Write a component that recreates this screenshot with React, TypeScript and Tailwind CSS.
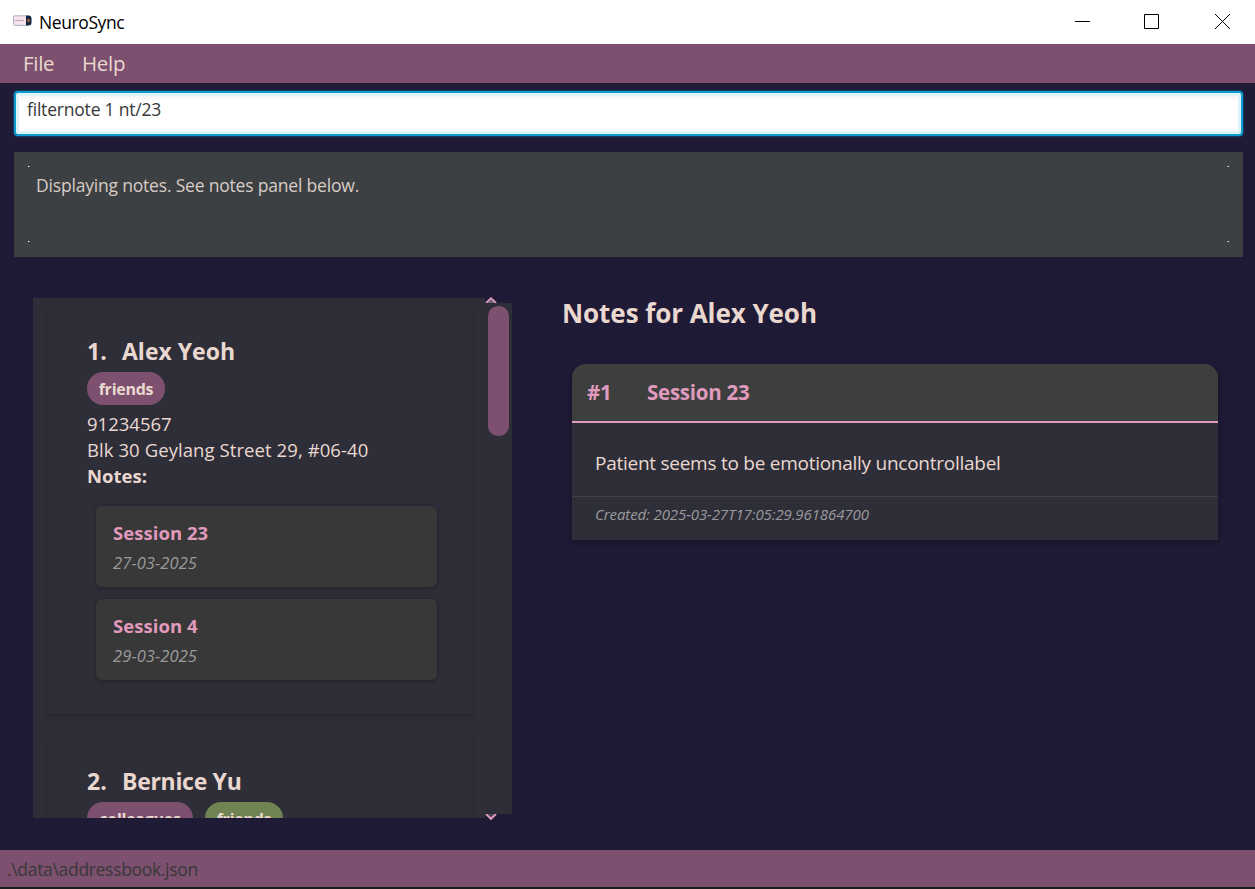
function Tag({ label, green = false }: { label: string; green?: boolean }) {
  return (
    <span
      className={`flex h-[33px] justify-center rounded-[16px] pt-px text-[16px] font-bold leading-[33px] tracking-[-0.25px] ${
        green ? "bg-[#6f8353]" : "bg-[#7c506e]"
      } ${label.length > 8 ? "w-[106px]" : "w-[78px]"}`}
    >
      {label}
    </span>
  );
}

function SessionCard({ title, date }: { title: string; date: string }) {
  return (
    <div className="h-[81px] w-[341px] rounded-[6px] bg-[#383838] pl-[17px] pt-[14px] shadow-[0_1px_4px_rgba(0,0,0,0.35)]">
      <div className="text-[18.5px] font-bold leading-[26px] tracking-[0.05px] text-[#e09abd]">{title}</div>
      <div className="mt-[5px] text-[16.5px] italic leading-6 tracking-[0.1px] text-[#9a9a9a]">{date}</div>
    </div>
  );
}

function PersonName({ index, name, tight = false }: { index: string; name: string; tight?: boolean }) {
  return (
    <div className="flex text-[23px] font-bold leading-8">
      <span className="w-[35px] shrink-0">{index}</span>
      <span className={tight ? "tracking-[-0.3px]" : ""}>{name}</span>
    </div>
  );
}

function CornerDots() {
  return (
    <div className="flex justify-between">
      <span className="size-px bg-white shadow-[1px_0_0_rgba(255,255,255,0.35)]" />
      <span className="size-px bg-white shadow-[-1px_0_0_rgba(255,255,255,0.35)]" />
    </div>
  );
}

export default function App() {
  return (
    <div className="flex h-[889px] w-[1255px] flex-col overflow-hidden whitespace-nowrap bg-[#1f1a36] font-['Open_Sans','Noto_Sans',sans-serif] text-[#ead8d0]">
      <header className="flex h-11 shrink-0 items-center bg-white pl-[13px] pr-[25px] text-black">
        <svg width="19" height="12" viewBox="0 0 19 12" className="mt-[-2px]">
          <rect x="0.5" y="0.8" width="14" height="9.6" rx="1" fill="#f6e3ee" stroke="#a9b3c4" />
          <path d="M13 .5h2.5a3 3 0 0 1 3 3v4a3 3 0 0 1-3 3H13z" fill="#12233d" />
          <ellipse cx="15.5" cy="5.5" rx="1.5" ry="2" fill="#8a5a3c" />
          <path d="M2 5.5h9" stroke="#b5aebb" strokeWidth="1" />
        </svg>
        <h1 className="ml-[7px] text-[17.5px] tracking-[-0.4px]">NeuroSync</h1>
        <div className="ml-auto flex pb-px">
          <svg width="15" height="15" className="mr-[54px]"><path d="M0 7.5h15" stroke="#000" /></svg>
          <svg width="15" height="15" className="mr-[56px]"><path d="M.5.5h14v14H.5z" fill="none" stroke="#000" /></svg>
          <svg width="15" height="15"><path d="M0 0l15 15M15 0L0 15" stroke="#000" /></svg>
        </div>
      </header>
      <nav className="flex h-[39px] shrink-0 items-center bg-[#7c506e] pl-[23px] text-[20.5px] tracking-[-0.3px]">
        <span className="w-[59px]">File</span>
        <span>Help</span>
      </nav>
      <div className="ml-[14px] mr-3 mt-2 h-[45px] shrink-0 rounded-[4px] border-2 border-[#0d9ccf] bg-white pl-[11px] text-[17.5px] leading-[33px] tracking-[-0.2px] text-[#383838] shadow-[0_0_2px_#0d9ccf,inset_0_0_0_3px_#dff3fb,inset_0_6px_3px_rgba(0,0,0,0.04)]">
        filternote 1 nt/23
      </div>
      <div className="ml-[14px] mr-3 mt-4 flex h-[105px] shrink-0 flex-col bg-[#3c4042] px-[14px] pt-[14px] text-[17.5px] leading-[26px] tracking-[-0.19px] text-[#d8ccc6]">
        <CornerDots />
        <p className="h-[74px] pl-2 pt-[5px]">Displaying notes. See notes panel below.</p>
        <CornerDots />
      </div>
      <main className="mt-[41px] flex h-[520px] shrink-0">
        <section className="relative ml-[33px] flex h-[520px] w-[479px]">
          <div className="h-[520px] w-[452px] overflow-hidden bg-[#2e2e39] pl-[14px] pt-2">
            <article className="h-[408px] w-[425px] pl-[40px] pt-[29px] shadow-[0_3px_5px_rgba(0,0,0,0.2)]">
              <PersonName index="1." name="Alex Yeoh" />
              <div className="mt-[5px] flex"><Tag label="friends" /></div>
              <div className="mt-[6px] text-[18.5px] leading-[26px]">
                <div>91234567</div>
                <div className="tracking-[0.08px]">Blk 30 Geylang Street 29, #06-40</div>
                <div className="font-bold">Notes:</div>
              </div>
              <div className="ml-[9px] mt-[17px] flex flex-col gap-3">
                <SessionCard title="Session 23" date="27-03-2025" />
                <SessionCard title="Session 4" date="29-03-2025" />
              </div>
            </article>
            <article className="mt-[22px] h-[408px] w-[425px] pl-[40px] pt-[29px] shadow-[0_3px_5px_rgba(0,0,0,0.2)]">
              <PersonName index="2." name="Bernice Yu" tight />
              <div className="mt-[5px] flex gap-3"><Tag label="colleagues" /><Tag label="friends" green /></div>
            </article>
          </div>
          <div className="mt-[5px] h-[511px] w-[27px] bg-[#2e2e39] pl-[3px] pt-[3px]">
            <div className="h-[130px] w-[21px] rounded-[10px] bg-[#7c506e]" />
          </div>
          <svg width="12" height="6" className="absolute left-[452px] top-[-1px]">
            <path d="M1 6L6 1.2L11 6" fill="#6b6574" stroke="#e09abd" strokeWidth="1.8" />
          </svg>
          <svg width="12" height="7" className="absolute left-[452px] top-[516px]">
            <path d="M1 0L6 4.8L11 0" fill="#4a4355" stroke="#e09abd" strokeWidth="2" />
          </svg>
        </section>
        <section className="ml-[50px] w-[656px]">
          <h2 className="mt-[-1px] text-[26px] font-bold leading-8 tracking-[-0.06px]">Notes for Alex Yeoh</h2>
          <article className="ml-[10px] mt-[35px] h-[176px] w-[646px] rounded-t-[14px] bg-[#2e2e39] shadow-[0_2px_6px_rgba(0,0,0,0.3)]">
            <div className="flex h-[59px] rounded-t-[14px] border-b-2 border-[#e09abd] bg-[#3d3f3f] pl-[15px] text-[20.5px] font-bold leading-[57px] tracking-[-0.25px] text-[#e09abd]">
              <span className="w-[60px]">#1</span>
              <span>Session 23</span>
            </div>
            <p className="h-[73px] pl-[23px] pt-[27px] text-[19px] leading-[26px] tracking-[-0.26px]">Patient seems to be emotionally uncontrollabel</p>
            <p className="h-[44px] border-t border-[#3f4040] pl-[23px] text-[15px] italic leading-[35px] tracking-[-0.1px] text-[#9a9a9a]">Created: 2025-03-27T17:05:29.961864700</p>
          </article>
        </section>
      </main>
      <footer className="mt-8 h-[37px] shrink-0 bg-[#7c506e] pl-[7px] text-[17.5px] leading-[38px] tracking-[-0.32px] text-[#383838]">
        .\data\addressbook.json
      </footer>
      <div className="h-[2px] bg-[#1d1d1d]" />
    </div>
  );
}
